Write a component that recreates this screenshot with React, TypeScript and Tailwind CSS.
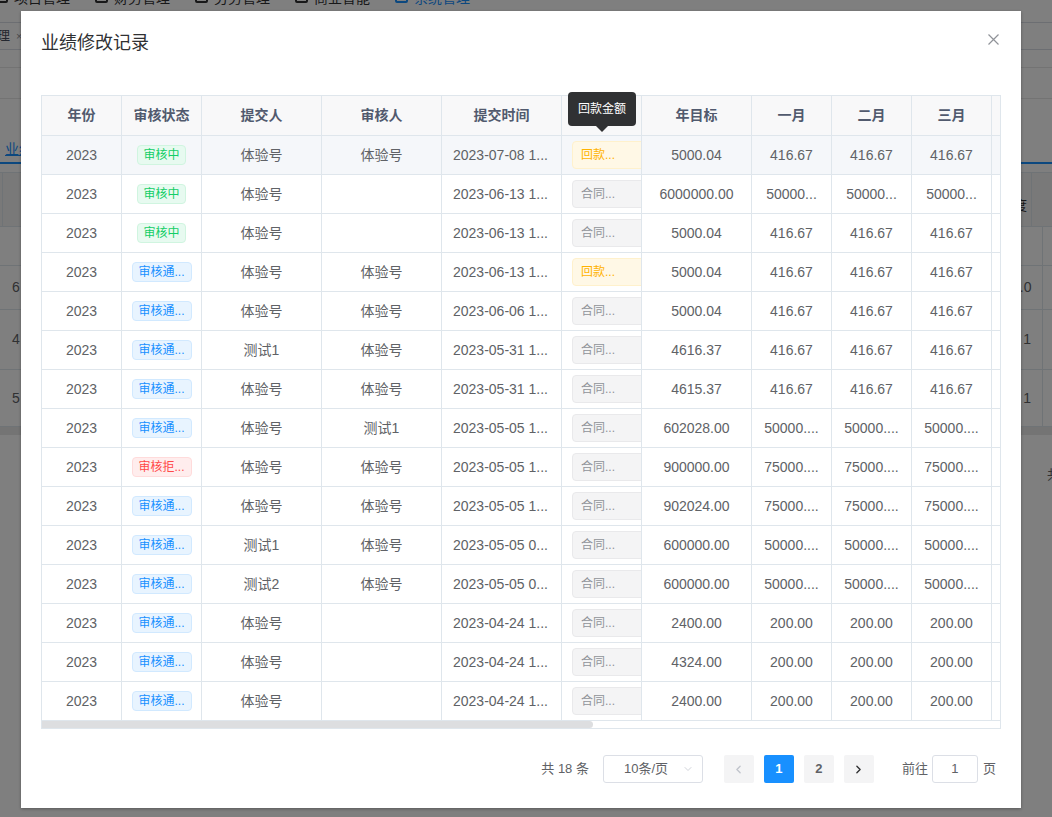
import { ChevronDown, ChevronLeft, ChevronRight } from 'lucide-react';

type Status = 'ing' | 'pass' | 'reject';
type Kind = 'back' | 'contract';

type Row = {
  status: Status;
  submitter: string;
  auditor: string;
  time: string;
  kind: Kind;
  target: string;
  months: string;
};

const COLS = [
  { title: '年份', w: 'w-[80px]' },
  { title: '审核状态', w: 'w-[80px]' },
  { title: '提交人', w: 'w-[120px]' },
  { title: '审核人', w: 'w-[120px]' },
  { title: '提交时间', w: 'w-[120px]' },
  { title: '业绩类型', w: 'w-[80px]' },
  { title: '年目标', w: 'w-[110px]' },
  { title: '一月', w: 'w-[80px]' },
  { title: '二月', w: 'w-[80px]' },
  { title: '三月', w: 'w-[80px]' },
  { title: '四月', w: 'w-[80px]' },
  { title: '五月', w: 'w-[80px]' },
];

const ROWS: Row[] = [
  { status: 'ing', submitter: '体验号', auditor: '体验号', time: '2023-07-08 1...', kind: 'back', target: '5000.04', months: '416.67' },
  { status: 'ing', submitter: '体验号', auditor: '', time: '2023-06-13 1...', kind: 'contract', target: '6000000.00', months: '50000...' },
  { status: 'ing', submitter: '体验号', auditor: '', time: '2023-06-13 1...', kind: 'contract', target: '5000.04', months: '416.67' },
  { status: 'pass', submitter: '体验号', auditor: '体验号', time: '2023-06-13 1...', kind: 'back', target: '5000.04', months: '416.67' },
  { status: 'pass', submitter: '体验号', auditor: '体验号', time: '2023-06-06 1...', kind: 'contract', target: '5000.04', months: '416.67' },
  { status: 'pass', submitter: '测试1', auditor: '体验号', time: '2023-05-31 1...', kind: 'contract', target: '4616.37', months: '416.67' },
  { status: 'pass', submitter: '体验号', auditor: '体验号', time: '2023-05-31 1...', kind: 'contract', target: '4615.37', months: '416.67' },
  { status: 'pass', submitter: '体验号', auditor: '测试1', time: '2023-05-05 1...', kind: 'contract', target: '602028.00', months: '50000....' },
  { status: 'reject', submitter: '体验号', auditor: '体验号', time: '2023-05-05 1...', kind: 'contract', target: '900000.00', months: '75000....' },
  { status: 'pass', submitter: '体验号', auditor: '体验号', time: '2023-05-05 1...', kind: 'contract', target: '902024.00', months: '75000....' },
  { status: 'pass', submitter: '测试1', auditor: '体验号', time: '2023-05-05 0...', kind: 'contract', target: '600000.00', months: '50000....' },
  { status: 'pass', submitter: '测试2', auditor: '体验号', time: '2023-05-05 0...', kind: 'contract', target: '600000.00', months: '50000....' },
  { status: 'pass', submitter: '体验号', auditor: '', time: '2023-04-24 1...', kind: 'contract', target: '2400.00', months: '200.00' },
  { status: 'pass', submitter: '体验号', auditor: '', time: '2023-04-24 1...', kind: 'contract', target: '4324.00', months: '200.00' },
  { status: 'pass', submitter: '体验号', auditor: '', time: '2023-04-24 1...', kind: 'contract', target: '2400.00', months: '200.00' },
];

const STATUS = {
  ing: { label: '审核中', cls: 'px-[5px] border-[#d0f5e0] bg-[#e7faf0] text-[#13ce66]' },
  pass: { label: '审核通...', cls: 'w-[60px] justify-center border-[#d1e9ff] bg-[#e8f4ff] text-[#1890ff]' },
  reject: { label: '审核拒...', cls: 'w-[60px] justify-center border-[#ffdbdb] bg-[#ffeded] text-[#ff4949]' },
};

const KIND = {
  back: { label: '回款...', cls: 'border-[#fff1cc] bg-[#fff8e6] text-[#ffb300]' },
  contract: { label: '合同...', cls: 'border-[#e9e9eb] bg-[#f4f4f5] text-[#909399]' },
};

const cell = 'flex shrink-0 items-center justify-center overflow-hidden whitespace-nowrap border-r border-[#dfe6ec]';

const NAV = ['项目管理', '财务管理', '劳务管理', '商业智能', '系统管理'];

const BG_ROWS = [
  { h: 'h-[39px]', l: '', r: '' },
  { h: 'h-[44px]', l: '6', r: '1.0' },
  { h: 'h-[60px]', l: '4', r: '1' },
  { h: 'h-[57px]', l: '5', r: '1' },
];

const BackgroundPage: React.FC = () => (
  <div className="flex h-full flex-col bg-white text-[14px] text-[#303133]">
    <div className="h-[22px] overflow-hidden">
      <div className="-ml-[5px] -mt-[10px] flex h-[16px] items-center">
        {NAV.map((name, i) => (
          <div key={name} className={`flex w-[100px] items-center gap-[6px] ${i === 4 ? 'text-[#1890ff]' : ''}`}>
            <span
              className={`h-[10px] w-[13px] rounded-[2px] border-2 ${i === 4 ? 'border-[#1890ff]' : 'border-[#303133]'}`}
            />
            <span className="leading-[16px]">{name}</span>
          </div>
        ))}
      </div>
    </div>
    <div className="flex h-[28px] items-center border-y border-[#d8dce5]">
      <span className="-ml-[16px] text-[13px] text-[#495060]">管理</span>
      <span className="ml-[6px] text-[11px] text-[#909399]">×</span>
    </div>
    <div className="h-[18px] border-b border-[#e6e6e6]" />
    <div className="h-[31px] border-b border-[#e6e6e6]" />
    <div className="flex h-[65px] items-end border-b-2 border-[#1890ff]">
      <span className="mb-[2px] ml-[5px] text-[14px] text-[#1890ff] underline">业绩管理</span>
    </div>
    <div className="h-[8px]" />
    <div className="flex h-[55px] justify-between border-y border-[#dfe6ec] bg-[#f2f2f2]">
      <div className="w-[3px] border-r border-[#dfe6ec]" />
      <div className="flex w-[40px] items-center">
        <span className="-ml-[11px] mt-[12px] w-[30px] text-[13px] text-[#303133]">进度</span>
        <div className="h-full flex-1 border-l border-[#dfe6ec]" />
      </div>
    </div>
    {BG_ROWS.map((r, i) => (
      <div key={i} className={`flex ${r.h} justify-between border-b border-[#dfe6ec]`}>
        <div className="flex items-center pl-[12px] text-[#606266]">{r.l}</div>
        <div className="flex w-[40px] items-center text-[#606266]">
          <span className="w-[30px] pr-[11px] text-right">{r.r}</span>
          <div className="h-full flex-1 border-l border-[#dfe6ec]" />
        </div>
      </div>
    ))}
    <div className="h-[8px] bg-[#e8e8e8]" />
    <div className="flex justify-end pt-[30px] text-[13px] text-[#606266]">
      <span className="-mr-[8px]">共</span>
    </div>
  </div>
);

const Pagination: React.FC = () => (
  <div className="mt-[26px] flex h-[28px] items-center justify-end pr-[5px] text-[13px] text-[#606266]">
    <span>共 18 条</span>
    <div className="ml-[14px] flex h-[28px] w-[100px] items-center rounded-[3px] border border-[#dcdfe6] pl-[20px] pr-[8px]">
      <span className="flex-1 text-[13px] text-[#606266]">10条/页</span>
      <ChevronDown size={12} strokeWidth={1.5} className="text-[#c0c4cc]" />
    </div>
    <div className="ml-[21px] flex h-[28px] w-[30px] items-center justify-center rounded-[2px] bg-[#f4f4f5]">
      <ChevronLeft size={13} strokeWidth={2.5} className="text-[#c0c4cc]" />
    </div>
    <div className="ml-[10px] flex h-[28px] w-[30px] items-center justify-center rounded-[2px] bg-[#1890ff] font-bold text-white">
      1
    </div>
    <div className="ml-[10px] flex h-[28px] w-[30px] items-center justify-center rounded-[2px] bg-[#f4f4f5] font-bold text-[#606266]">
      2
    </div>
    <div className="ml-[10px] flex h-[28px] w-[30px] items-center justify-center rounded-[2px] bg-[#f4f4f5]">
      <ChevronRight size={13} strokeWidth={2.5} className="text-[#303133]" />
    </div>
    <span className="ml-[28px]">前往</span>
    <div className="ml-[4px] flex h-[28px] w-[46px] items-center justify-center rounded-[3px] border border-[#dcdfe6] text-[#606266]">
      1
    </div>
    <span className="ml-[5px]">页</span>
  </div>
);

const App: React.FC = () => (
  <div className="relative h-[817px] w-[1052px] overflow-hidden font-['Liberation_Sans','Noto_Sans_CJK_SC',sans-serif]">
    <BackgroundPage />
    <div className="absolute inset-0 bg-black/50" />

    <div className="absolute left-[21px] top-[11px] h-[797px] w-[1000px] bg-white shadow-[0_1px_3px_rgba(0,0,0,0.3)]">
      <div className="px-5 pb-[10px] pt-5">
        <h2 className="text-[18px] leading-[24px] text-[#303133]">业绩修改记录</h2>
      </div>
      <button className="absolute right-[22px] top-[23px] flex h-[11px] w-[11px] items-center justify-center">
        <svg width="11" height="11" viewBox="0 0 11 11">
          <path d="M0.5 0.5 L10.5 10.5 M10.5 0.5 L0.5 10.5" stroke="#909399" strokeWidth="1.2" fill="none" />
        </svg>
      </button>

      <div className="px-5 pt-[30px]">
        <div className="w-[960px] overflow-hidden border border-[#dfe6ec]">
          <div className="flex h-[40px] border-b border-[#dfe6ec] bg-[#f8f8f9]">
            {COLS.map((c) => (
              <div key={c.title} className={`${cell} ${c.w} text-[14px] font-bold text-[#515a6e]`}>
                {c.title}
              </div>
            ))}
          </div>
          {ROWS.map((r, i) => (
            <div
              key={i}
              className={`flex h-[39px] border-b border-[#dfe6ec] text-[14px] text-[#606266] ${i === 0 ? 'bg-[#f5f7fa]' : 'bg-white'}`}
            >
              <div className={`${cell} w-[80px]`}>2023</div>
              <div className={`${cell} w-[80px]`}>
                <span className={`flex h-[20px] items-center rounded-[4px] border text-[12px] ${STATUS[r.status].cls}`}>
                  {STATUS[r.status].label}
                </span>
              </div>
              <div className={`${cell} w-[120px]`}>{r.submitter}</div>
              <div className={`${cell} w-[120px]`}>{r.auditor}</div>
              <div className={`${cell} w-[120px] justify-start pl-[11px]`}>{r.time}</div>
              <div className={`${cell} w-[80px] justify-start pl-[10px]`}>
                <span className={`flex h-[28px] w-[80px] shrink-0 items-center rounded-[4px] border pl-[8px] text-[12px] ${KIND[r.kind].cls}`}>
                  {KIND[r.kind].label}
                </span>
              </div>
              <div className={`${cell} w-[110px]`}>{r.target}</div>
              <div className={`${cell} w-[80px]`}>{r.months}</div>
              <div className={`${cell} w-[80px]`}>{r.months}</div>
              <div className={`${cell} w-[80px]`}>{r.months}</div>
              <div className={`${cell} w-[80px]`}>{r.months}</div>
              <div className={`${cell} w-[80px]`}>{r.months}</div>
            </div>
          ))}
          <div className="h-[7px] bg-white">
            <div className="h-[7px] w-[551px] rounded-r-[4px] bg-[#dddee0]" />
          </div>
        </div>
        <Pagination />
      </div>

      <div className="absolute left-[547px] top-[81px] flex flex-col items-center">
        <div className="rounded-[4px] bg-[#303133] px-[10px] py-[10px] text-[12px] leading-[14px] text-white">回款金额</div>
        <div className="h-0 w-0 border-x-[6px] border-t-[6px] border-x-transparent border-t-[#303133]" />
      </div>
    </div>
  </div>
);

export default App;
